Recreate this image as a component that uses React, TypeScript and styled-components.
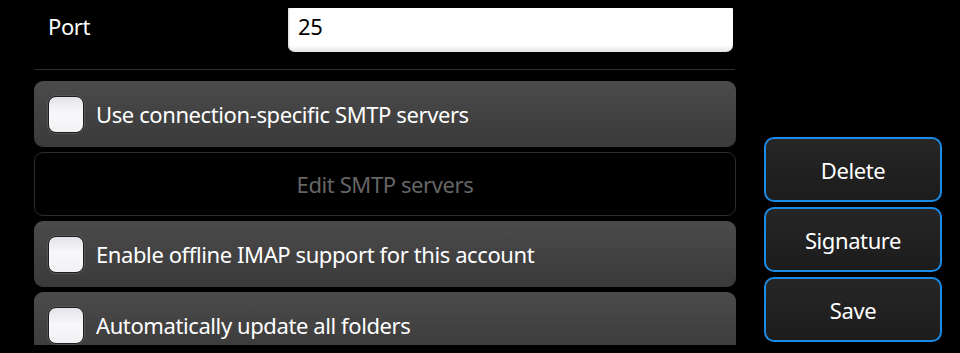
import React from "react";
import styled, { createGlobalStyle } from "styled-components";

const GlobalStyle = createGlobalStyle`
  html, body {
    margin: 0;
    padding: 0;
    background: #000;
  }
  body {
    font-family: "Noto Sans", "Open Sans", sans-serif;
    color: #fff;
  }
`;

const Page = styled.div`
  display: flex;
  width: 960px;
  height: 353px;
  background: #000;
  overflow: hidden;
`;

const Settings = styled.div`
  width: 702px;
  height: 345px;
  margin-left: 34px;
  overflow: hidden;
  display: flex;
  flex-direction: column;
`;

const PortRow = styled.div`
  display: flex;
  align-items: flex-start;
  padding-top: 8px;
  height: 69px;
  flex-shrink: 0;
  box-sizing: border-box;
`;

const FieldLabel = styled.div`
  width: 254px;
  padding-left: 14px;
  box-sizing: border-box;
  font-size: 22px;
  letter-spacing: -0.4px;
  line-height: 36px;
`;

const TextField = styled.div`
  width: 445px;
  height: 44px;
  box-sizing: border-box;
  padding: 0 10px;
  background: linear-gradient(#ffffff 85%, #e4e0e4);
  border-radius: 1px 1px 7px 7px;
  box-shadow: inset 2px 0 2px -1px #d8d4d8;
  color: #000;
  font-size: 22px;
  letter-spacing: -0.4px;
  line-height: 36px;
`;

const Separator = styled.div`
  height: 1px;
  flex-shrink: 0;
  margin: 0 1px 11px;
  background: #2e2e2e;
`;

const List = styled.div`
  display: flex;
  flex-direction: column;
  gap: 5px;
`;

const CheckRow = styled.div`
  display: flex;
  align-items: center;
  gap: 12px;
  height: 66px;
  flex-shrink: 0;
  padding-left: 14px;
  box-sizing: border-box;
  border-radius: 9px;
  background: linear-gradient(#4c4a4b, #3a3a3a);
  font-size: 22px;
  letter-spacing: -0.4px;
`;

const CheckBox = styled.div`
  width: 36px;
  height: 37px;
  flex-shrink: 0;
  box-sizing: border-box;
  border-radius: 8px;
  border: 1px solid #1e1e1e;
  background: linear-gradient(#e4e2e8, #f8f8fa 45%, #f2f2f4);
  box-shadow: 0 0 0 1px #555;
`;

const LinkRow = styled.div<{ $disabled?: boolean }>`
  display: flex;
  align-items: center;
  justify-content: center;
  height: 64px;
  flex-shrink: 0;
  box-sizing: border-box;
  border: 1px solid #2c2c2c;
  border-radius: 9px;
  background: #000;
  color: ${(p) => (p.$disabled ? "#666" : "#fff")};
  font-size: 22px;
  letter-spacing: -0.4px;
`;

const Actions = styled.div`
  width: 178px;
  margin-left: 28px;
  padding-bottom: 11px;
  display: flex;
  flex-direction: column;
  justify-content: flex-end;
  gap: 5px;
`;

const ActionButton = styled.div`
  height: 65px;
  box-sizing: border-box;
  display: flex;
  align-items: center;
  justify-content: center;
  border: 2px solid #1a8ce8;
  border-radius: 10px;
  background: linear-gradient(#262626, #1c1c1c);
  font-size: 22px;
  letter-spacing: -0.4px;
`;

const options = [
  "Use connection-specific SMTP servers",
  "Enable offline IMAP support for this account",
  "Automatically update all folders",
];

export default function App() {
  return (
    <>
      <GlobalStyle />
      <Page>
        <Settings>
          <PortRow>
            <FieldLabel>Port</FieldLabel>
            <TextField>25</TextField>
          </PortRow>
          <Separator />
          <List>
            <CheckRow>
              <CheckBox />
              {options[0]}
            </CheckRow>
            <LinkRow $disabled>Edit SMTP servers</LinkRow>
            <CheckRow>
              <CheckBox />
              {options[1]}
            </CheckRow>
            <CheckRow>
              <CheckBox />
              {options[2]}
            </CheckRow>
          </List>
        </Settings>
        <Actions>
          <ActionButton>Delete</ActionButton>
          <ActionButton>Signature</ActionButton>
          <ActionButton>Save</ActionButton>
        </Actions>
      </Page>
    </>
  );
}
